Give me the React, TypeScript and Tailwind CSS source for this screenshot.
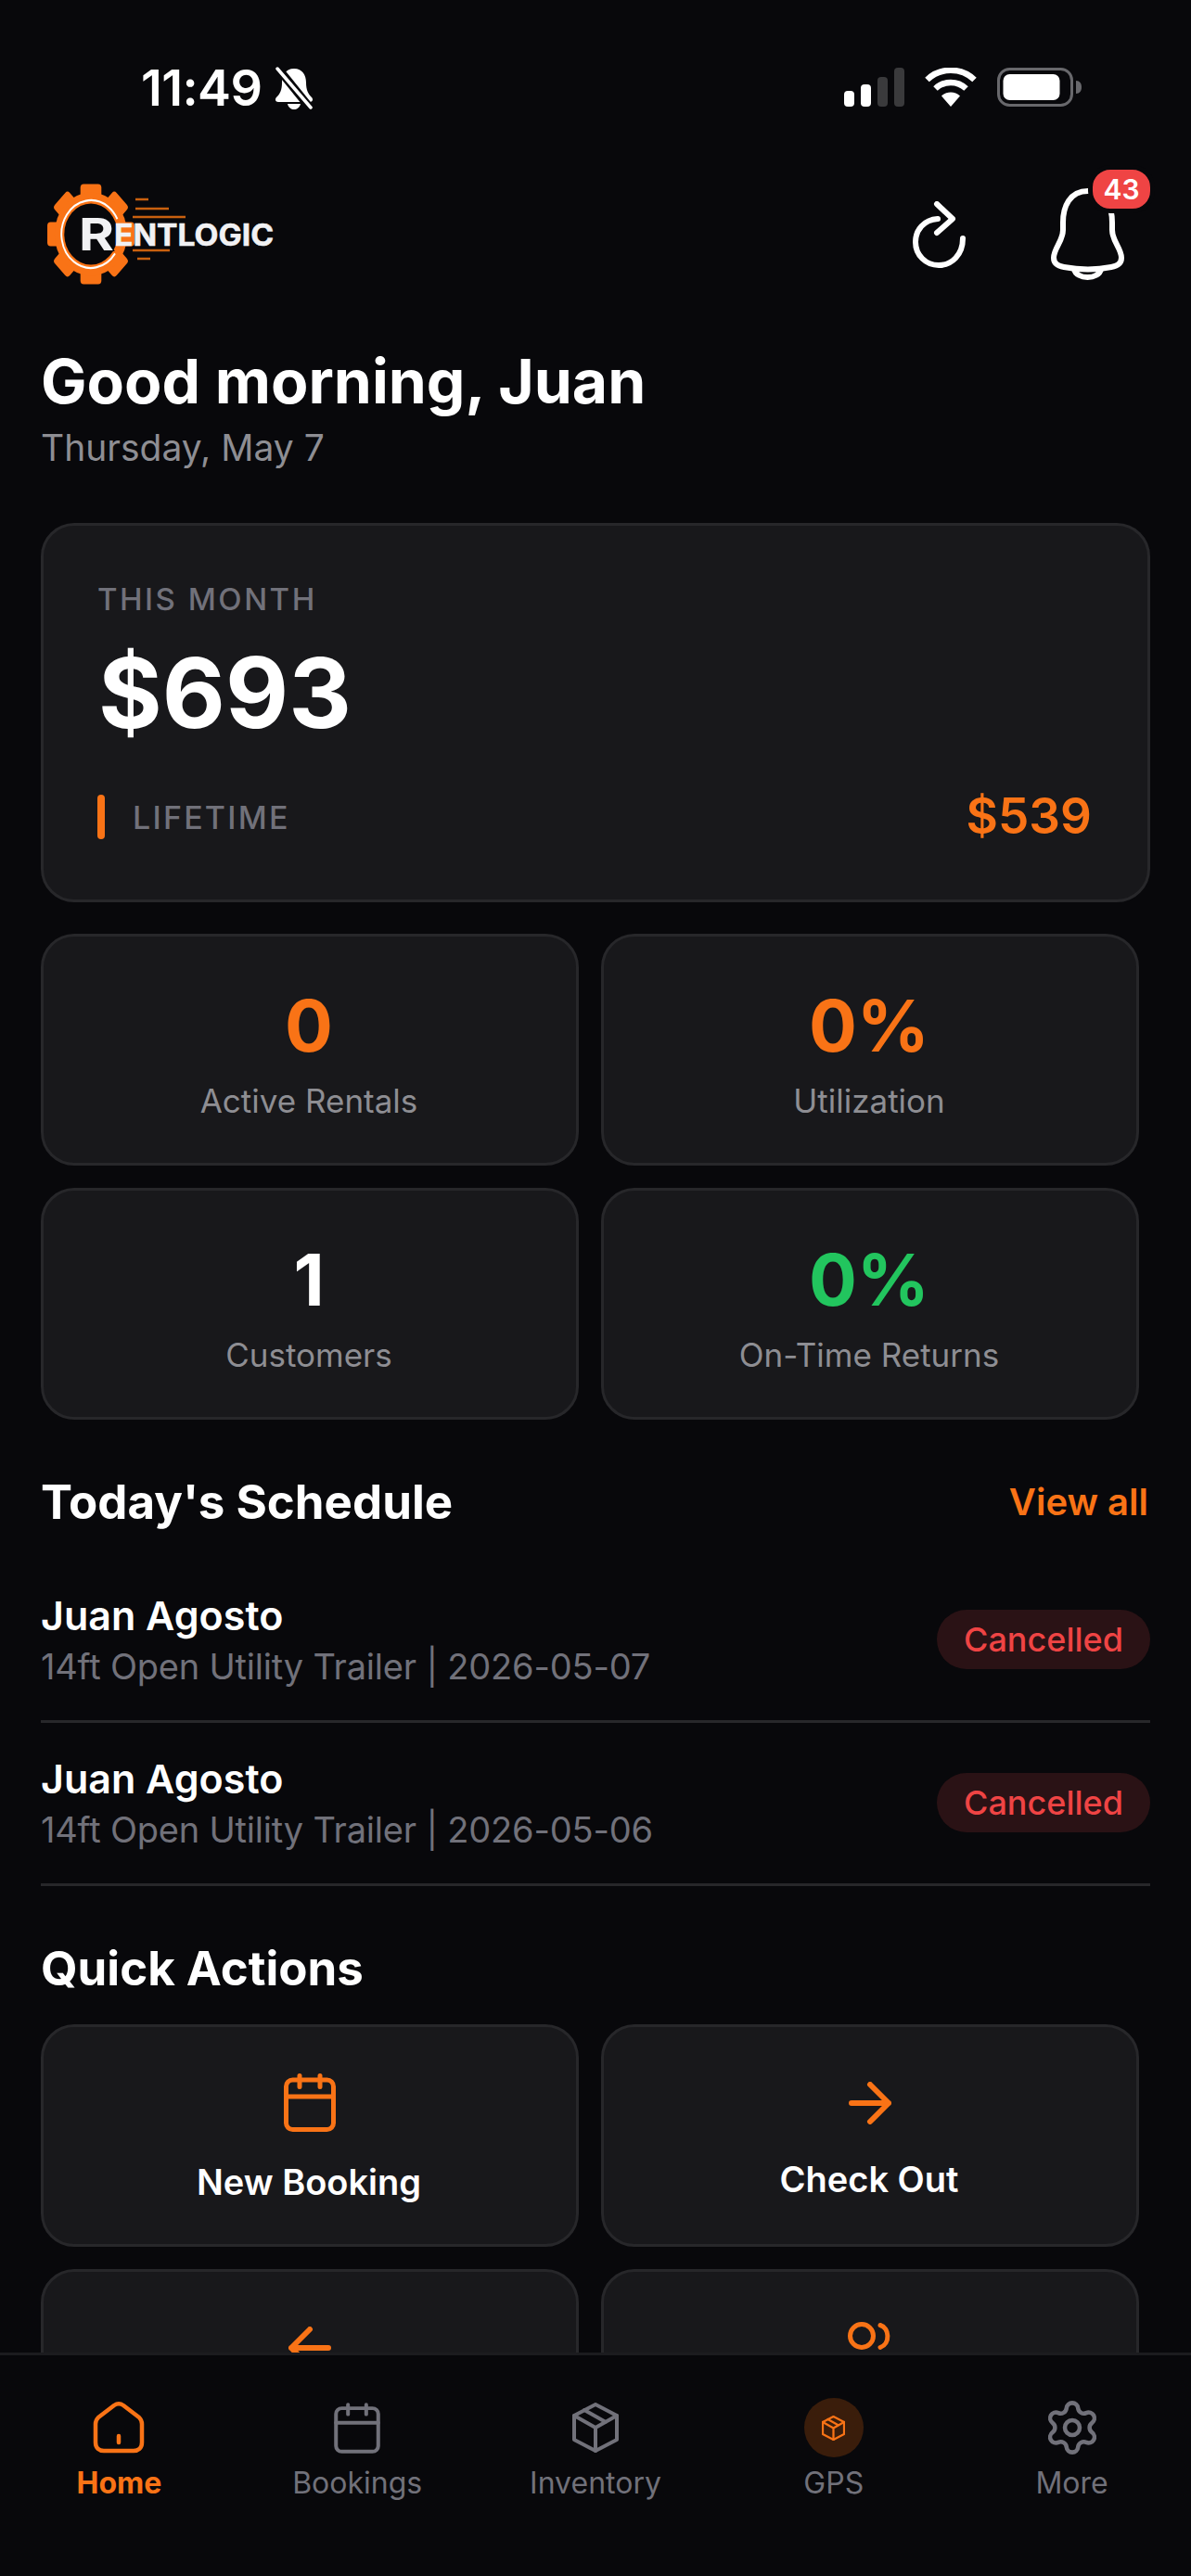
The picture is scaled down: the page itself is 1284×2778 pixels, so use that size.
import React from "react";
import { Settings } from "lucide-react";

const teeth = [0, 45, 90, 135, 180, 225, 270, 315];

function Logo() {
  return (
    <svg width="250" height="125" viewBox="50 190 250 125" className="mt-[5px] block">
      <g transform="translate(98 252.5) scale(0.87 1)">
        {teeth.map((a) => (
          <rect key={a} x="-13" y="-54" width="26" height="24" rx="4" fill="#f97316" transform={`rotate(${a})`} />
        ))}
        <circle r="45" fill="#f97316" />
        <circle r="33" fill="#08080b" />
        <circle r="36.5" fill="none" stroke="#ffffff" strokeWidth="2.2" strokeDasharray="190 39" transform="rotate(35)" />
      </g>
      <path d="M146 215 h14 M146 225 h36 M143 234 h57 M143 270 h40 M148 279 h14" stroke="#c9600f" strokeWidth="2.5" />
      <text x="123" y="264.5" fill="#f1f1f3" stroke="#f1f1f3" strokeWidth="0.6" fontFamily="Inter, sans-serif" fontWeight="700" fontSize="32" textLength="172" lengthAdjust="spacingAndGlyphs">ENTLOGIC</text>
      <text x="85" y="270" fill="#f1f1f3" stroke="#08080b" strokeWidth="2" paintOrder="stroke" fontFamily="Inter, sans-serif" fontWeight="700" fontSize="48" textLength="38" lengthAdjust="spacingAndGlyphs">R</text>
    </svg>
  );
}

function StatusBar() {
  return (
    <div className="flex h-[185px] items-start justify-between pl-[152px] pr-[117px] pt-[71px]">
      <div className="flex items-center gap-[14px]">
        <span className="text-[54px] font-semibold leading-[48px] tracking-[-0.6px] text-white">11:49</span>
        <svg width="42" height="46" viewBox="0 0 42 46" fill="none">
          <path d="M21 2c-9 0-13 7-13 15 0 8-2 12-6 16-2 2-1 5 2 5h34c3 0 4-3 2-5-4-4-6-8-6-16 0-8-4-15-13-15Z" fill="#fff" />
          <path d="M14 40h14c-1 4-4 6-7 6s-6-2-7-6Z" fill="#fff" />
          <path d="M4 2 38 44" stroke="#08080b" strokeWidth="9" />
          <path d="M3 2 39 44" stroke="#fff" strokeWidth="3.5" strokeLinecap="round" />
        </svg>
      </div>
      <div className="flex items-center pt-[2px]">
        <svg width="66" height="42" viewBox="0 0 66 42" className="mr-[21px]">
          <rect x="0" y="25" width="11" height="17" rx="4" fill="#fff" />
          <rect x="18" y="18" width="11" height="24" rx="4" fill="#fff" />
          <rect x="36" y="10" width="11" height="32" rx="4" fill="#3a3a3c" />
          <rect x="54" y="0" width="11" height="42" rx="4" fill="#3a3a3c" />
        </svg>
        <svg width="56" height="42" viewBox="0 0 56 42" fill="none" className="mr-[22px]">
          <path d="M28 42 18 30.5a14.5 14.5 0 0 1 20 0Z" fill="#fff" />
          <path d="M11.5 22.5a24 24 0 0 1 33 0" stroke="#fff" strokeWidth="6.5" />
          <path d="M2.5 13a37 37 0 0 1 51 0" stroke="#fff" strokeWidth="6.5" />
        </svg>
        <svg width="92" height="42" viewBox="0 0 92 42">
          <rect x="1.5" y="1.5" width="79" height="39" rx="12" fill="none" stroke="#68686c" strokeWidth="3" />
          <rect x="6.5" y="7" width="61" height="28" rx="7" fill="#fff" />
          <path d="M85 14c4 0 6 3 6 7s-2 7-6 7Z" fill="#68686c" />
        </svg>
      </div>
    </div>
  );
}

function Header() {
  return (
    <div className="flex h-[130px] items-center justify-between pl-[6px]">
      <Logo />
      <div className="flex items-start">
        <svg width="60" height="72" viewBox="0 0 60 72" fill="none" stroke="#fff" strokeWidth="6" strokeLinecap="round" strokeLinejoin="round" className="mr-[89px] mt-[19px]">
          <path d="M27 19C12 20 3 31 3 44c0 14 11 25 25 25s26-11 26-29" />
          <path d="M26 3l17 16-17 15" />
        </svg>
        <div className="relative mr-[27px] h-[104px] w-[80px]">
          <svg width="80" height="104" viewBox="0 0 80 104" fill="none" stroke="#fff" strokeWidth="6" strokeLinecap="round" strokeLinejoin="round" className="block">
            <path d="M40 8C20 8 13 25 13 42v8C13 62 3 70 3 80c0 6 5 9 11 10 16 3 36 3 51 0 6-1 11-4 11-10 0-10-10-18-10-30v-8C66 25 59 8 40 8Z" />
            <path d="M25 92c2 12 27 12 29 0" />
          </svg>
          <div className="absolute left-[40px] top-[-20px] flex h-[52px] w-[72px] items-center justify-center rounded-[24px] border-[5px] border-[#08080b] bg-[#ef4444] text-[30px] font-semibold leading-none text-white">43</div>
        </div>
      </div>
    </div>
  );
}

function Stat({ value, label, color }: { value: string; label: string; color: string }) {
  return (
    <div className="flex h-[250px] flex-col items-center rounded-[36px] border-[3px] border-[#27272a] bg-[#18181b] pr-[2px] pt-[54px]">
      <div className={`text-[77px] font-bold leading-[84px] ${color}`}>{value}</div>
      <div className="mt-[15px] text-[35px] leading-[48px] text-[#8e8e93]">{label}</div>
    </div>
  );
}

function Row({ date }: { date: string }) {
  return (
    <div className="flex items-center justify-between border-b-[3px] border-[#27272a] pb-[33px] pt-[34px]">
      <div>
        <div className="text-[43px] font-semibold leading-[52px] text-white">Juan Agosto</div>
        <div className="mt-[4px] text-[38px] leading-[50px] tracking-[-0.2px] text-[#71717a]">14ft Open Utility Trailer | {date}</div>
      </div>
      <div className="mb-[3px] flex h-[64px] w-[230px] items-center justify-center rounded-full bg-[#2a1215] text-[36px] font-medium text-[#ef4444]">Cancelled</div>
    </div>
  );
}

function Action({ label, h, children }: { label?: string; h: number; children: React.ReactNode }) {
  return (
    <div className="flex h-[240px] flex-col items-center justify-center rounded-[36px] border-[3px] border-[#27272a] bg-[#18181b] pt-[3px]">
      <div className={h === 72 ? "flex h-[72px] items-center justify-center" : "flex h-[66px] items-center justify-center"}>{children}</div>
      <div className="mt-[24px] h-[50px] pr-[2px] text-[38px] font-semibold leading-[50px] text-white">{label}</div>
    </div>
  );
}

function CalIcon({ w, h, sw, color }: { w: number; h: number; sw: number; color: string }) {
  return (
    <svg width={w} height={h} viewBox="0 0 56 63" preserveAspectRatio="none" fill="none" stroke={color} strokeWidth={sw} strokeLinecap="round" strokeLinejoin="round">
      <rect x="2.5" y="7" width="51" height="53.5" rx="7" />
      <path d="M17 2.5v12M39 2.5v12M2.5 25h51" />
    </svg>
  );
}

function BoxIcon({ w, h, sw, color }: { w: number; h: number; sw: number; color: string }) {
  return (
    <svg width={w} height={h} viewBox="0 0 50 54" fill="none" stroke={color} strokeWidth={sw} strokeLinejoin="round" strokeLinecap="round">
      <path d="M25 2 48 14v26L25 52 2 40V14Z" />
      <path d="M2 14l23 13 23-13M25 27v25M13 8l23 13" />
    </svg>
  );
}

function Nav() {
  const inactive = "#71717a";
  const items: { label: string; icon: React.ReactNode; active?: boolean }[] = [
    {
      label: "Home",
      active: true,
      icon: (
        <svg width="56" height="56" viewBox="0 0 56 56" fill="none" stroke="#f97316" strokeWidth="4.5" strokeLinecap="round" strokeLinejoin="round">
          <path d="M23 4 6 17c-2 2-3 4-3 7v20c0 6 4 9 9 9h32c5 0 9-3 9-9V24c0-3-1-5-3-7L33 4c-3-2-7-2-10 0Z" />
          <path d="M28 37v7" strokeWidth="4.5" />
        </svg>
      ),
    },
    { label: "Bookings", icon: <CalIcon w={50} h={55} sw={4.5} color={inactive} /> },
    { label: "Inventory", icon: <BoxIcon w={50} h={54} sw={4} color={inactive} /> },
    {
      label: "GPS",
      icon: (
        <div className="flex h-[64px] w-[64px] items-center justify-center rounded-full bg-[#3a1d0b]">
          <BoxIcon w={25} h={27} sw={4.5} color="#f97316" />
        </div>
      ),
    },
    { label: "More", icon: <Settings size={64} strokeWidth={1.7} color={inactive} /> },
  ];
  return (
    <nav className="grid h-[241px] shrink-0 grid-cols-5 border-t-[3px] border-[#1c1c1f] bg-[#08080b] pt-[46px]">
      {items.map((it) => (
        <div key={it.label} className="flex flex-col items-center">
          <div className="flex h-[64px] items-center justify-center">{it.icon}</div>
          <div className={it.active ? "mt-[6px] text-[32px] font-bold leading-[44px] text-[#f97316]" : "mt-[6px] text-[32px] leading-[44px] text-[#71717a]"}>{it.label}</div>
        </div>
      ))}
    </nav>
  );
}

export default function App() {
  return (
    <div className="flex h-[2778px] w-[1284px] flex-col overflow-hidden bg-[#08080b] [font-family:Inter,sans-serif]">
      <main className="min-h-0 flex-1 overflow-hidden">
        <StatusBar />
        <div className="px-[44px]">
          <Header />
          <h1 className="mt-[56px] text-[66px] font-bold leading-[80px] text-white">Good morning, Juan</h1>
          <p className="mt-[6px] text-[39px] leading-[52px] text-[#8e8e93]">Thursday, May 7</p>

          <section className="mt-[55px] rounded-[36px] border-[3px] border-[#27272a] bg-[#18181b] pb-[65px] pl-[58px] pr-[60px] pt-[59px]">
            <div className="text-[33px] font-medium leading-[40px] tracking-[2.5px] text-[#71717a]">THIS MONTH</div>
            <div className="mt-[21px] pl-[1px] text-[105px] font-bold leading-[120px] text-white">$693</div>
            <div className="mt-[50px] flex h-[48px] items-center justify-between">
              <div className="flex items-center gap-[30px]">
                <div className="h-[48px] w-[8px] rounded-full bg-[#f97316]" />
                <span className="text-[34px] font-medium tracking-[2.2px] text-[#71717a]">LIFETIME</span>
              </div>
              <span className="text-[53px] font-semibold text-[#f97316]">$539</span>
            </div>
          </section>

          <section className="mt-[34px] grid w-[1184px] grid-cols-2 gap-[24px]">
            <Stat value="0" label="Active Rentals" color="text-[#f97316]" />
            <Stat value="0%" label="Utilization" color="text-[#f97316]" />
            <Stat value="1" label="Customers" color="text-white" />
            <Stat value="0%" label="On-Time Returns" color="text-[#22c55e]" />
          </section>

          <section className="mt-[59px]">
            <div className="mb-[32px] flex h-[60px] items-center justify-between">
              <h2 className="text-[51px] font-bold leading-[60px] text-white">Today's Schedule</h2>
              <span className="pr-[2px] text-[40px] font-semibold text-[#f97316]">View all</span>
            </div>
            <Row date="2026-05-07" />
            <Row date="2026-05-06" />
          </section>

          <section className="mt-[59px]">
            <h2 className="mb-[30px] text-[51px] font-bold leading-[60px] text-white">Quick Actions</h2>
            <div className="grid w-[1184px] grid-cols-2 gap-[24px]">
              <Action label="New Booking" h={72}>
                <CalIcon w={56} h={63} sw={5} color="#f97316" />
              </Action>
              <Action label="Check Out" h={66}>
                <svg width="46" height="46" viewBox="0 0 46 46" fill="none" stroke="#f97316" strokeWidth="6" strokeLinecap="round" strokeLinejoin="round">
                  <path d="M3 23h40M23 3l20 20-20 20" />
                </svg>
              </Action>
              <Action h={66}>
                <svg width="46" height="46" viewBox="0 0 46 46" fill="none" stroke="#f97316" strokeWidth="6" strokeLinecap="round" strokeLinejoin="round">
                  <path d="M43 23H3M23 3 3 23l20 20" />
                </svg>
              </Action>
              <Action h={66}>
                <svg width="52" height="66" viewBox="0 0 52 66" fill="none" stroke="#f97316" strokeWidth="5" strokeLinecap="round">
                  <circle cx="17" cy="20" r="12.5" />
                  <path d="M37 8.5c10 3 11 20 0 24" />
                </svg>
              </Action>
            </div>
          </section>
        </div>
      </main>
      <Nav />
    </div>
  );
}
